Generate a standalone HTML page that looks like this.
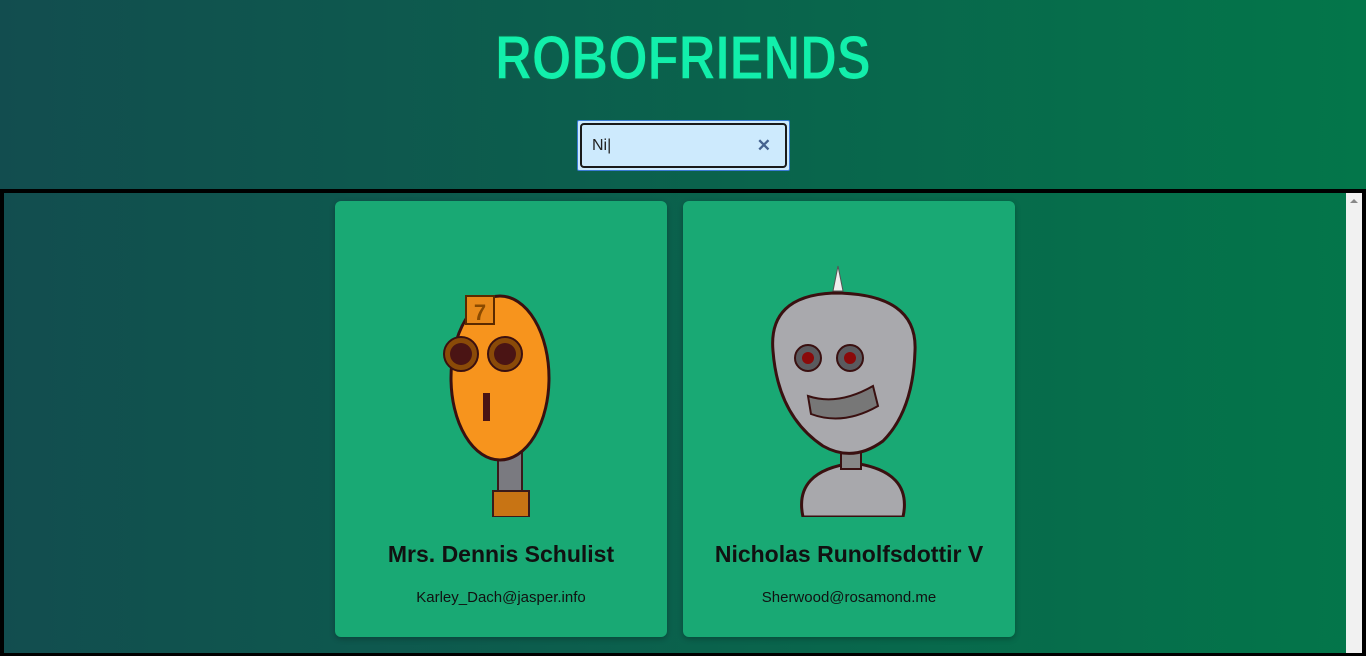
<!DOCTYPE html>
<html><head><style>
*{margin:0;padding:0;box-sizing:border-box}
body{width:1366px;height:656px;overflow:hidden;background:linear-gradient(to right,#124d4f,#03764a);font-family:"Liberation Sans",sans-serif}
h1{position:absolute;top:28px;left:0;width:1366px;text-align:center;font-size:62px;font-weight:bold;color:#12efab;line-height:62px;transform:scaleX(0.82);-webkit-text-stroke:1px #0a6b4a}
.search{position:absolute;left:577px;top:120px;width:213px;height:51px;border:1px solid #3a7bd5;background:#cdeafd;border-radius:2px}
.search .in{position:absolute;inset:2px;border:2px solid #1a1a1a;border-radius:4px}
.search span{position:absolute;left:14px;top:16px;font-size:16px;color:#222}
.search b{position:absolute;right:18px;top:15px;font-size:17px;color:#44628f}
.box{position:absolute;left:0;top:189px;width:1366px;height:467px;border:4px solid #000;border-bottom-width:3px}
.sb{position:absolute;right:0;top:0;width:16px;height:100%;background:#f1f1f1}
.card{position:absolute;top:8px;width:332px;height:436px;background:#19a974;border-radius:6px;box-shadow:0 2px 6px rgba(0,0,0,.25);text-align:center}
.card h2{position:absolute;top:340px;width:100%;font-size:23px;color:#111}
.card p{position:absolute;top:388px;width:100%;font-size:15px;color:#111}
svg{position:absolute;left:0;top:0}
</style></head><body>
<h1>ROBOFRIENDS</h1>
<div class="search"><div class="in"></div><span>Ni|</span><b>✕</b></div>
<div class="box">
<div class="sb"><div style="margin:6px auto;width:0;height:0;border:4px solid transparent;border-bottom:4px solid #888;border-top:0"></div></div>
<div class="card" style="left:331px">
<svg width="332" height="316" viewBox="0 0 332 316">
<rect x="163" y="245" width="24" height="50" fill="#7a7a80" stroke="#3a1a1a" stroke-width="2"/>
<rect x="158" y="290" width="36" height="26" fill="#c87414" stroke="#3a1a1a" stroke-width="2"/>
<ellipse cx="165" cy="177" rx="49" ry="82" fill="#f7941d" stroke="#3a1010" stroke-width="3"/>
<rect x="131" y="95" width="28" height="28" fill="#e98a1a" stroke="#5a2a00" stroke-width="2"/>
<text x="145" y="119" font-size="22" font-weight="bold" text-anchor="middle" fill="#8a4a00">7</text>
<circle cx="126" cy="153" r="17" fill="#8a4a08" stroke="#3a1010" stroke-width="2"/><circle cx="126" cy="153" r="11" fill="#4a1414"/>
<circle cx="170" cy="153" r="17" fill="#8a4a08" stroke="#3a1010" stroke-width="2"/><circle cx="170" cy="153" r="11" fill="#4a1414"/>
<rect x="148" y="192" width="7" height="28" fill="#4a1414"/>
</svg>
<h2>Mrs. Dennis Schulist</h2><p>Karley_Dach@jasper.info</p></div>
<div class="card" style="left:679px">
<svg width="332" height="316" viewBox="0 0 332 316">
<path d="M120 316 Q110 270 170 262 Q230 270 220 316Z" fill="#a8a8ac" stroke="#3a1010" stroke-width="3"/>
<rect x="158" y="240" width="20" height="28" fill="#888" stroke="#3a1010" stroke-width="2"/>
<path d="M150 90 L155 65 L160 90Z" fill="#eee" stroke="#555"/>
<path d="M90 150 Q85 95 150 92 Q235 92 232 150 Q230 210 200 240 Q170 262 140 245 Q95 215 90 150Z" fill="#a9a9ad" stroke="#3a1010" stroke-width="3"/>
<circle cx="125" cy="157" r="13" fill="#5a5a5e" stroke="#3a1010" stroke-width="2"/><circle cx="125" cy="157" r="6" fill="#8a0a0a"/>
<circle cx="167" cy="157" r="13" fill="#5a5a5e" stroke="#3a1010" stroke-width="2"/><circle cx="167" cy="157" r="6" fill="#8a0a0a"/>
<path d="M125 195 Q155 205 190 185 L195 205 Q160 225 128 213Z" fill="#777" stroke="#3a1010" stroke-width="2"/>
</svg>
<h2>Nicholas Runolfsdottir V</h2><p>Sherwood@rosamond.me</p></div>
</div>
</body></html>
